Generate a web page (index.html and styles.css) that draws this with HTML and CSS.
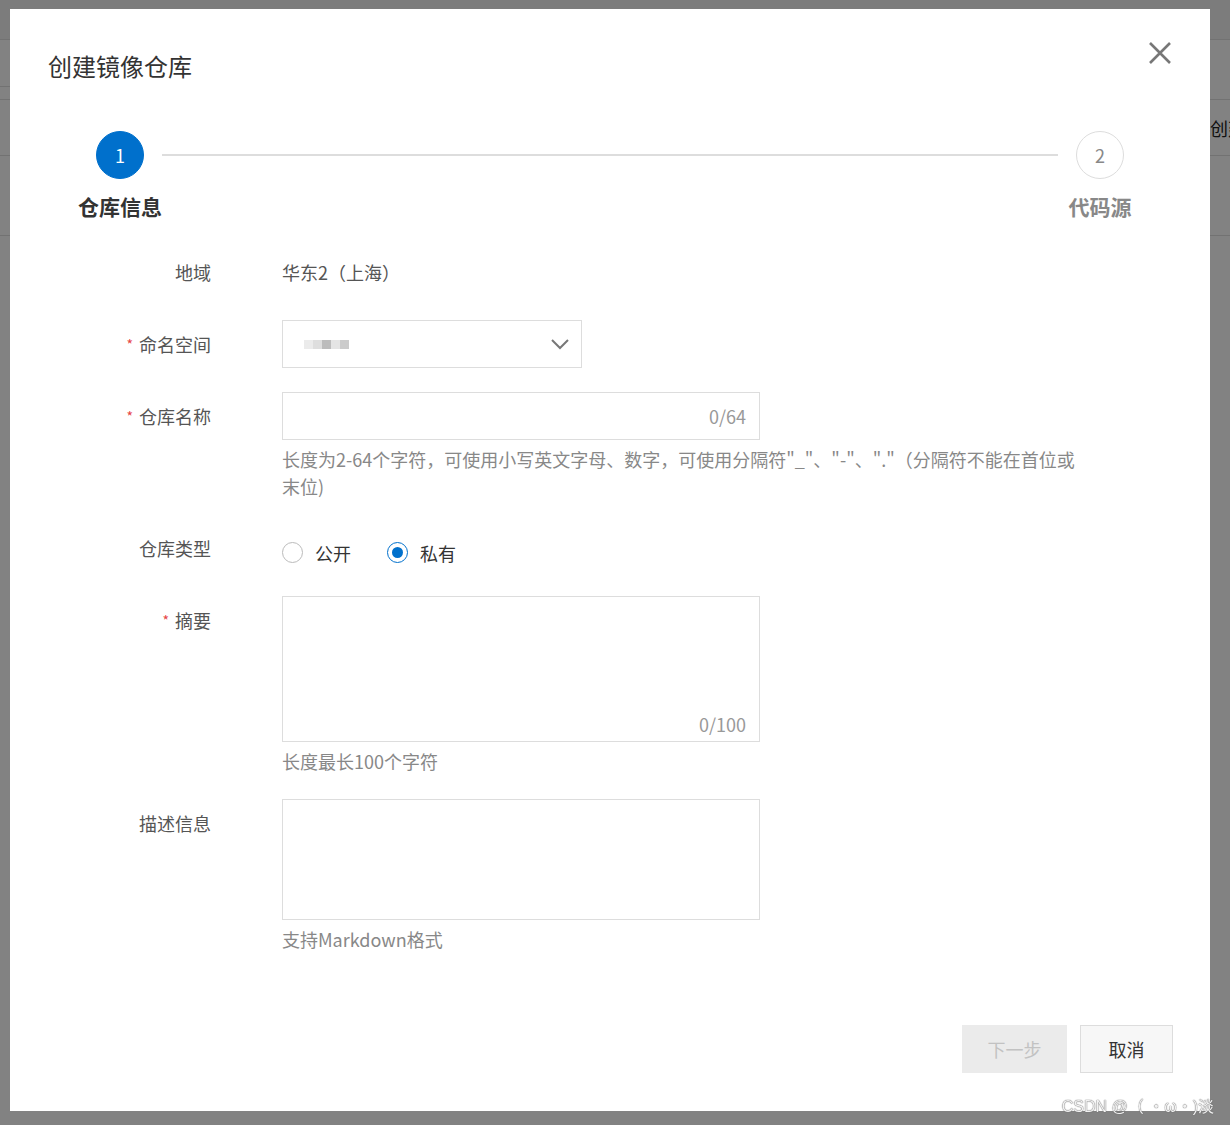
FILE: index.html
```html
<!DOCTYPE html>
<html lang="zh-CN">
<head>
<meta charset="utf-8">
<title>创建镜像仓库</title>
<link rel="stylesheet" href="styles.css">
</head>
<body>
<div class="page">
  <div class="page-top"></div>
  <div class="page-row page-row-s"></div>
  <div class="page-row page-row-a"></div>
  <div class="page-row page-row-b"><span class="page-text">创建</span></div>
  <div class="page-row page-row-c"></div>
</div>
<div class="mask"></div>
<div class="modal">
  <div class="modal-header">
    <h2 class="modal-title">创建镜像仓库</h2>
  </div>
  <button class="close" aria-label="关闭">
    <svg width="24" height="24" viewBox="0 0 24 24"><path d="M2 2 L22 22 M22 2 L2 22" stroke="#777" stroke-width="2.6" fill="none"/></svg>
  </button>
  <div class="steps">
    <div class="step step-active">
      <div class="step-circle">1</div>
      <div class="step-label">仓库信息</div>
    </div>
    <div class="step-line"></div>
    <div class="step">
      <div class="step-circle">2</div>
      <div class="step-label">代码源</div>
    </div>
  </div>
  <div class="form">
    <div class="label">地域</div>
    <div class="control"><div class="static">华东2（上海）</div></div>

    <div class="label"><span class="req">*</span>命名空间</div>
    <div class="control">
      <div class="select">
        <div class="blur">
          <span class="px p1"></span><span class="px p2"></span><span class="px p3"></span><span class="px p4"></span><span class="px p5"></span>
        </div>
        <svg class="chev" width="18" height="11" viewBox="0 0 18 11"><path d="M1 1 L9 9 L17 1" stroke="#777" stroke-width="2" fill="none"/></svg>
      </div>
    </div>

    <div class="label"><span class="req">*</span>仓库名称</div>
    <div class="control">
      <div class="input"><span class="count">0/64</span></div>
      <div class="help help-wide">长度为2-64个字符，可使用小写英文字母、数字，可使用分隔符"_"、"-"、"."（分隔符不能在首位或末位)</div>
    </div>

    <div class="label">仓库类型</div>
    <div class="control">
      <div class="radios">
        <label class="radio"><span class="dot"></span>公开</label>
        <label class="radio radio-on"><span class="dot"></span>私有</label>
      </div>
    </div>

    <div class="label"><span class="req">*</span>摘要</div>
    <div class="control">
      <div class="textarea ta-summary"><span class="count">0/100</span></div>
      <div class="help">长度最长100个字符</div>
    </div>

    <div class="label">描述信息</div>
    <div class="control">
      <div class="textarea ta-desc"></div>
      <div class="help">支持Markdown格式</div>
    </div>
  </div>
  <div class="footer">
    <button class="btn btn-disabled">下一步</button>
    <button class="btn btn-normal">取消</button>
  </div>
</div>
<div class="watermark">CSDN @（ ・ω・)淡</div>
</body>
</html>
```
FILE: styles.css
```css
* { box-sizing: border-box; }
html, body {
  margin: 0;
  padding: 0;
  width: 1230px;
  height: 1125px;
  overflow: hidden;
  font-family: "Noto Sans CJK SC", "Liberation Sans", sans-serif;
  background: #fff;
}
.page {
  width: 1230px;
  height: 1125px;
  background: #fff;
}
.page-top {
  height: 40px;
  background: #f4f4f4;
  border-bottom: 1px solid #e0e0e0;
}
.page-row {
  border-bottom: 1px solid #e0e0e0;
}
.page-row-s { height: 47px; width: 200px; }
.page-row-a { height: 13px; }
.page-row-b {
  height: 56px;
  display: flex;
  align-items: center;
  justify-content: flex-end;
}
.page-row-c { height: 80px; }
.page-text {
  display: block;
  font-size: 18px;
  color: #222;
  width: 20px;
  overflow: hidden;
  white-space: nowrap;
}
.mask {
  position: fixed;
  inset: 0;
  background: rgba(0, 0, 0, 0.49);
}
.modal {
  position: absolute;
  left: 10px;
  top: 9px;
  width: 1200px;
  height: 1102px;
  background: #fff;
  display: flex;
  flex-direction: column;
  padding: 41px 38px 38px 38px;
}
.modal-header { height: 32px; }
.modal-title {
  margin: 0;
  font-size: 24px;
  line-height: 32px;
  font-weight: 400;
  color: #333;
}
.close {
  position: absolute;
  top: 32px;
  right: 38px;
  width: 24px;
  height: 24px;
  padding: 0;
  border: 0;
  background: none;
  display: flex;
}
.steps {
  margin: 49px 30px 0 30px;
  display: grid;
  grid-template-columns: 84px 1fr 84px;
}
.step {
  display: flex;
  flex-direction: column;
  align-items: center;
}
.step-circle {
  width: 48px;
  height: 48px;
  border-radius: 50%;
  border: 1px solid #ddd;
  color: #888;
  font-size: 18px;
  display: flex;
  align-items: center;
  justify-content: center;
  background: #fff;
}
.step-active .step-circle {
  background: #0070cc;
  border-color: #0070cc;
  color: #fff;
}
.step-label {
  margin-top: 13px;
  font-size: 21px;
  line-height: 28px;
  font-weight: 700;
  color: #888;
  white-space: nowrap;
}
.step-active .step-label { color: #333; }
.step-line {
  height: 2px;
  background: #ddd;
  margin-top: 23px;
}
.form {
  margin-top: 28px;
  display: grid;
  grid-template-columns: 163px 478px;
  column-gap: 71px;
  row-gap: 24px;
}
.label {
  height: 48px;
  line-height: 48px;
  text-align: right;
  font-size: 18px;
  color: #555;
  white-space: nowrap;
}
.req {
  color: #e64545;
  font-size: 14px;
  margin-right: 6px;
  vertical-align: 2px;
}
.control { font-size: 18px; }
.static {
  line-height: 48px;
  color: #555;
}
.select {
  width: 300px;
  height: 48px;
  border: 1px solid #ddd;
  display: flex;
  align-items: center;
  justify-content: space-between;
  padding: 0 12px 0 21px;
}
.blur { display: flex; }
.px { width: 9px; height: 9px; display: block; }
.p1 { background: #ebebeb; }
.p2 { background: #dedede; }
.p3 { background: #bcbcbc; }
.p4 { background: #e4e4e4; }
.p5 { background: #cbcbcb; }
.input {
  width: 478px;
  height: 48px;
  border: 1px solid #ddd;
  display: flex;
  align-items: center;
  justify-content: flex-end;
  padding: 0 13px;
}
.count {
  color: #999;
  font-size: 18px;
}
.help {
  margin-top: 6px;
  font-size: 18px;
  line-height: 27px;
  color: #888;
  white-space: nowrap;
}
.help-wide {
  white-space: normal;
  width: 800px;
}
.radios {
  height: 48px;
  display: flex;
  align-items: center;
  gap: 36px;
  padding-top: 9px;
}
.radio {
  display: flex;
  align-items: center;
  color: #333;
  font-size: 18px;
}
.dot {
  width: 21px;
  height: 21px;
  border-radius: 50%;
  border: 1px solid #bbb;
  margin-right: 12px;
  position: relative;
}
.radio-on .dot { border-color: #0070cc; }
.radio-on .dot::after {
  content: "";
  position: absolute;
  left: 4px;
  top: 4px;
  width: 11px;
  height: 11px;
  border-radius: 50%;
  background: #0070cc;
}
.textarea {
  width: 478px;
  border: 1px solid #ddd;
  display: flex;
  align-items: flex-end;
  justify-content: flex-end;
  padding: 0 13px 4px 13px;
}
.ta-summary { height: 146px; }
.ta-desc { height: 121px; }
.footer {
  margin-top: auto;
  margin-right: -1px;
  display: flex;
  justify-content: flex-end;
  gap: 13px;
}
.btn {
  height: 48px;
  font-family: inherit;
  font-size: 18px;
  border: 1px solid #ddd;
  padding: 0;
}
.btn-disabled {
  width: 105px;
  background: #ebebeb;
  border-color: #ebebeb;
  color: #c2c2c2;
}
.btn-normal {
  width: 93px;
  background: #f7f7f7;
  color: #333;
}
.watermark {
  position: fixed;
  right: 16px;
  bottom: 8px;
  font-size: 16px;
  color: #f2f2f2;
  text-shadow: 0 0 1px #666, 0 0 1px #666;
  font-family: "Liberation Sans", "Noto Sans CJK SC", sans-serif;
  white-space: nowrap;
}
```
